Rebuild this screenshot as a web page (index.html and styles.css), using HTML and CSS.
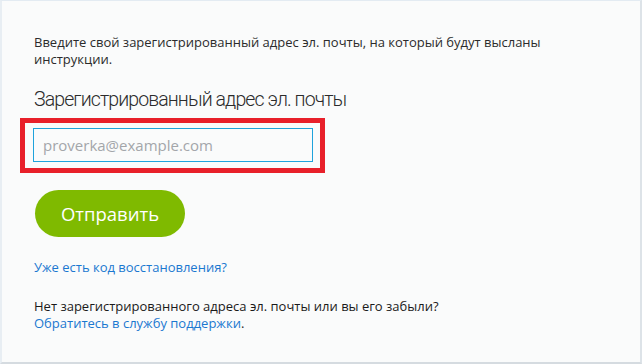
FILE: index.html
```html
<!DOCTYPE html>
<html lang="ru">
<head>
    <meta charset="UTF-8">
    <meta name="viewport" content="width=device-width, initial-scale=1.0">
    <title>Восстановление пароля</title>
    <link rel="stylesheet" href="styles.css">
</head>
<body>
    <div class="page">
        <p class="intro">Введите свой зарегистрированный адрес эл. почты, на который будут высланы инструкции.</p>
        <h2 class="field-title">Зарегистрированный адрес эл. почты</h2>
        <div class="highlight">
            <input type="text" class="email-input" placeholder="proverka@example.com">
        </div>
        <button class="send-btn">Отправить</button>
        <a class="link code-link" href="#">Уже есть код восстановления?</a>
        <div class="help">
            <div class="help-text">Нет зарегистрированного адреса эл. почты или вы его забыли?</div>
            <a class="link" href="#">Обратитесь в службу поддержки</a>.
        </div>
    </div>
</body>
</html>
```

FILE: styles.css
```css
html, body {
    margin: 0;
    height: 100%;
}
body {
    font-family: 'Open Sans', 'Noto Sans', sans-serif;
    font-size: 13px;
    color: #2b2b2b;
    background: #fff;
}
.page {
    box-sizing: border-box;
    height: 364px;
    padding: 33px 20px 0 32px;
    background: #fafbfb;
    border-top: 1px solid #e3ebf2;
    border-left: 2px solid #e8eef3;
    border-right: 2px solid #dde3e8;
    border-bottom: 2px solid #d5dbe0;
}
.intro {
    margin: 0;
    width: 530px;
    line-height: 17px;
}
.field-title {
    margin: 20px 0 0;
    font-family: Roboto, 'Open Sans', sans-serif;
    font-size: 19.5px;
    font-weight: 300;
    letter-spacing: -0.9px;
    color: #2b2b2b;
    line-height: 24px;
}
.highlight {
    width: fit-content;
    margin: 6px 0 0 -14px;
    padding: 5px 7px 6px 8px;
    border: 5px solid #e8202a;
}
.email-input {
    box-sizing: border-box;
    display: block;
    width: 280px;
    height: 34px;
    padding: 0 9px;
    border: 1px solid #1fa3dc;
    background: #fafbfb;
    font-family: inherit;
    font-size: 15px;
    color: #333;
}
.email-input::placeholder {
    color: #a3a6aa;
}
.email-input:focus {
    outline: none;
}
.send-btn {
    display: block;
    margin: 17px 0 0 1px;
    width: 150px;
    height: 47px;
    border: none;
    border-radius: 24px;
    background: #7fba00;
    color: #fff;
    font-family: inherit;
    font-size: 18.5px;
    cursor: pointer;
}
.link {
    color: #1a78d0;
    text-decoration: none;
}
.code-link {
    display: block;
    margin-top: 22px;
    line-height: 17px;
}
.help {
    margin-top: 22px;
    line-height: 17px;
}
.help-text {
    color: #1a1a1a;
}
```
